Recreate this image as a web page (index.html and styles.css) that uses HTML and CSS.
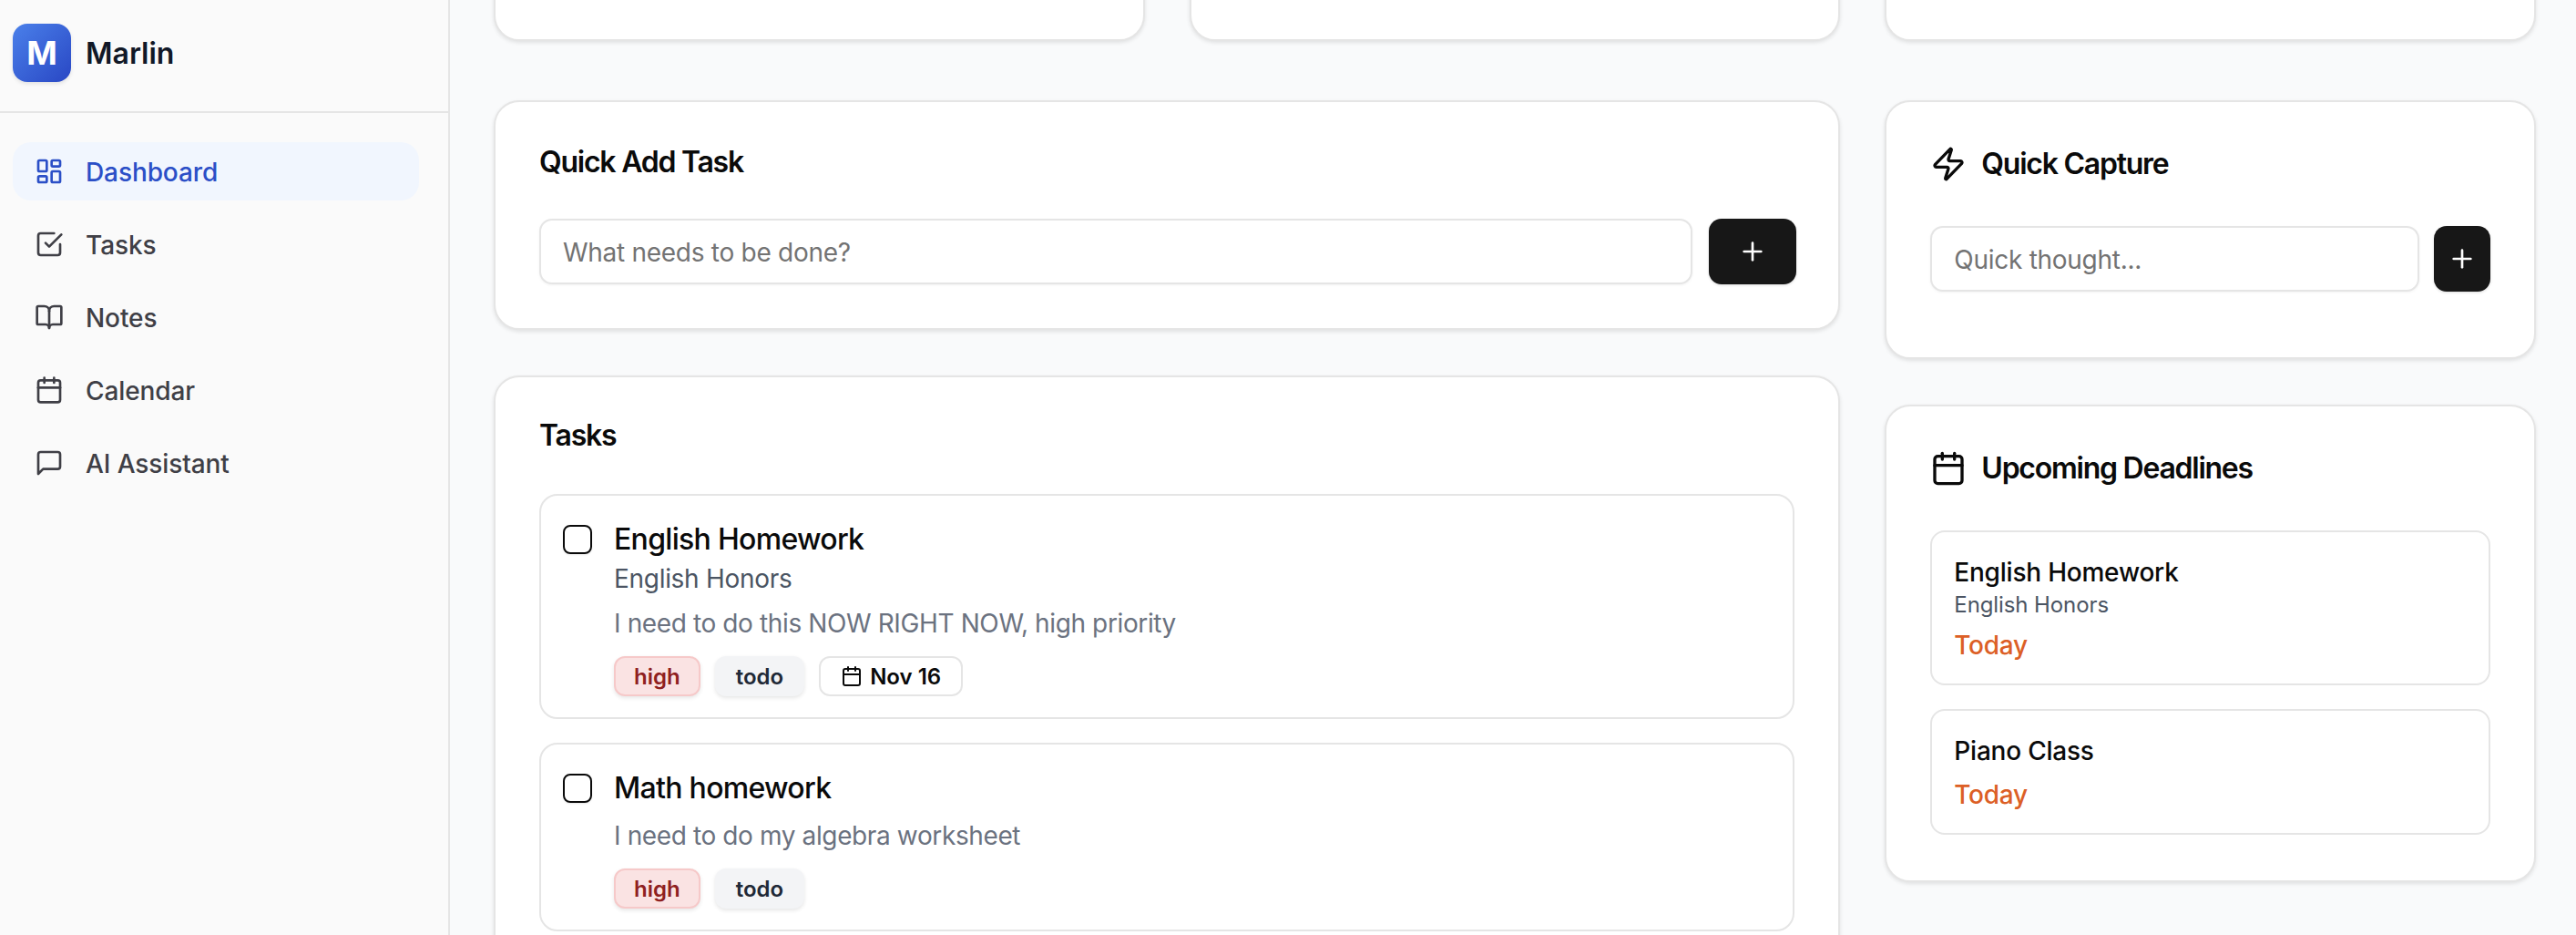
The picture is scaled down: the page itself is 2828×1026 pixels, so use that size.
FILE: index.html
```html
<!DOCTYPE html>
<html lang="en">
<head>
    <meta charset="UTF-8">
    <meta name="viewport" content="width=device-width, initial-scale=1.0">
    <title>Marlin</title>
    <link rel="stylesheet" href="styles.css">
</head>
<body>
    <aside class="sidebar">
        <div class="brand">
            <div class="brand-logo">M</div>
            <span class="brand-name">Marlin</span>
        </div>
        <nav class="nav">
            <a class="nav-item active" href="#">
                <svg class="icon" viewBox="0 0 24 24"><rect x="3" y="3" width="7" height="9" rx="1"/><rect x="14" y="3" width="7" height="5" rx="1"/><rect x="14" y="12" width="7" height="9" rx="1"/><rect x="3" y="16" width="7" height="5" rx="1"/></svg>
                Dashboard
            </a>
            <a class="nav-item" href="#">
                <svg class="icon" viewBox="0 0 24 24"><path d="m9 11 3 3L22 4"/><path d="M21 12v7a2 2 0 0 1-2 2H5a2 2 0 0 1-2-2V5a2 2 0 0 1 2-2h11"/></svg>
                Tasks
            </a>
            <a class="nav-item" href="#">
                <svg class="icon" viewBox="0 0 24 24"><path d="M12 7v14"/><path d="M3 18a1 1 0 0 1-1-1V4a1 1 0 0 1 1-1h5a4 4 0 0 1 4 4 4 4 0 0 1 4-4h5a1 1 0 0 1 1 1v13a1 1 0 0 1-1 1h-6a3 3 0 0 0-3 3 3 3 0 0 0-3-3z"/></svg>
                Notes
            </a>
            <a class="nav-item" href="#">
                <svg class="icon" viewBox="0 0 24 24"><path d="M8 2v4"/><path d="M16 2v4"/><rect x="3" y="4" width="18" height="18" rx="2"/><path d="M3 10h18"/></svg>
                Calendar
            </a>
            <a class="nav-item" href="#">
                <svg class="icon" viewBox="0 0 24 24"><path d="M21 15a2 2 0 0 1-2 2H7l-4 4V5a2 2 0 0 1 2-2h14a2 2 0 0 1 2 2z"/></svg>
                AI Assistant
            </a>
        </nav>
    </aside>

    <main class="content">
        <div class="stats">
            <div class="card stat-card"></div>
            <div class="card stat-card"></div>
            <div class="card stat-card"></div>
        </div>

        <div class="columns">
            <div class="column-wide">
                <section class="card">
                    <h3 class="card-title">Quick Add Task</h3>
                    <form class="add-form">
                        <input class="text-input" type="text" placeholder="What needs to be done?">
                        <button class="add-button add-button-wide" type="button">
                            <svg class="icon" viewBox="0 0 24 24"><path d="M5 12h14"/><path d="M12 5v14"/></svg>
                        </button>
                    </form>
                </section>

                <section class="card">
                    <h3 class="card-title tasks-title">Tasks</h3>
                    <div class="task-list">
                        <div class="task">
                            <span class="checkbox"></span>
                            <div class="task-body">
                                <div class="task-title">English Homework</div>
                                <div class="task-subject">English Honors</div>
                                <div class="task-desc">I need to do this NOW RIGHT NOW, high priority</div>
                                <div class="tags">
                                    <span class="tag tag-high">high</span>
                                    <span class="tag tag-status">todo</span>
                                    <span class="tag tag-date">
                                        <svg class="icon" viewBox="0 0 24 24"><path d="M8 2v4"/><path d="M16 2v4"/><rect x="3" y="4" width="18" height="18" rx="2"/><path d="M3 10h18"/></svg>
                                        Nov 16
                                    </span>
                                </div>
                            </div>
                        </div>
                        <div class="task">
                            <span class="checkbox"></span>
                            <div class="task-body">
                                <div class="task-title">Math homework</div>
                                <div class="task-desc">I need to do my algebra worksheet</div>
                                <div class="tags">
                                    <span class="tag tag-high">high</span>
                                    <span class="tag tag-status">todo</span>
                                </div>
                            </div>
                        </div>
                        <div class="task task-next"></div>
                    </div>
                </section>
            </div>

            <div class="column-side">
                <section class="card capture-card">
                    <h3 class="card-title side-title">
                        <svg class="icon" viewBox="0 0 24 24"><path d="M4 14a1 1 0 0 1-.78-1.63l9.9-10.2a.5.5 0 0 1 .86.46l-1.92 6.02A1 1 0 0 0 13 10h7a1 1 0 0 1 .78 1.63l-9.9 10.2a.5.5 0 0 1-.86-.46l1.92-6.02A1 1 0 0 0 11 14z"/></svg>
                        Quick Capture
                    </h3>
                    <form class="add-form">
                        <input class="text-input" type="text" placeholder="Quick thought...">
                        <button class="add-button" type="button">
                            <svg class="icon" viewBox="0 0 24 24"><path d="M5 12h14"/><path d="M12 5v14"/></svg>
                        </button>
                    </form>
                </section>

                <section class="card">
                    <h3 class="card-title side-title">
                        <svg class="icon" viewBox="0 0 24 24"><path d="M8 2v4"/><path d="M16 2v4"/><rect x="3" y="4" width="18" height="18" rx="2"/><path d="M3 10h18"/></svg>
                        Upcoming Deadlines
                    </h3>
                    <div class="deadline-list">
                        <div class="deadline">
                            <div class="deadline-title">English Homework</div>
                            <div class="deadline-subject">English Honors</div>
                            <div class="deadline-due">Today</div>
                        </div>
                        <div class="deadline">
                            <div class="deadline-title">Piano Class</div>
                            <div class="deadline-due">Today</div>
                        </div>
                    </div>
                </section>
            </div>
        </div>
    </main>
</body>
</html>
```

FILE: styles.css
```css
* {
    box-sizing: border-box;
}

html, body {
    height: 100%;
}

body {
    font-family: 'Inter', 'Liberation Sans', sans-serif;
    margin: 0;
    display: flex;
    overflow: hidden;
    background-color: #f9fafb;
    color: #0a0a0a;
}

.icon {
    fill: none;
    stroke: currentColor;
    stroke-width: 2;
    stroke-linecap: round;
    stroke-linejoin: round;
    flex-shrink: 0;
}

/* sidebar */

.sidebar {
    width: 494px;
    flex-shrink: 0;
    background-color: #fafafa;
    border-right: 2px solid #e5e5e5;
}

.brand {
    height: 124px;
    padding: 26px 14px 0;
    display: flex;
    align-items: flex-start;
    gap: 16px;
    border-bottom: 2px solid #e5e5e5;
}

.brand-logo {
    width: 64px;
    height: 64px;
    border-radius: 16px;
    background: linear-gradient(135deg, #4a80ea, #2947c4);
    box-shadow: 0 2px 4px rgba(0, 0, 0, 0.1);
    color: #fff;
    font-size: 36px;
    font-weight: 700;
    display: flex;
    align-items: center;
    justify-content: center;
}

.brand-name {
    font-size: 32px;
    line-height: 66px;
    font-weight: 600;
    color: #111827;
}

.nav {
    padding: 32px 32px 0 14px;
    display: flex;
    flex-direction: column;
    gap: 16px;
}

.nav-item {
    height: 64px;
    padding: 2px 24px 0;
    display: flex;
    align-items: center;
    gap: 24px;
    border-radius: 20px;
    font-size: 28px;
    font-weight: 500;
    letter-spacing: -0.1px;
    color: #3f3f46;
    text-decoration: none;
}

.nav-item .icon {
    width: 32px;
    height: 32px;
    margin-top: -2px;
}

.nav-item.active {
    background-color: #f1f6fe;
    color: #2b4fc7;
}

/* main area */

.content {
    flex: 1;
    min-width: 0;
    padding: 0 44px 0 48px;
}

.card {
    background-color: #fff;
    border: 2px solid #e5e5e5;
    border-radius: 28px;
    box-shadow: 0 2px 4px rgba(0, 0, 0, 0.1);
    padding: 48px;
}

.stats {
    display: grid;
    grid-template-columns: repeat(3, 1fr);
    column-gap: 49px;
    margin-top: -100px;
}

.stat-card {
    height: 145px;
}

.columns {
    display: grid;
    grid-template-columns: repeat(3, 1fr);
    column-gap: 49px;
    margin-top: 65px;
}

.column-wide {
    grid-column: span 2;
    display: flex;
    flex-direction: column;
    gap: 50px;
}

.column-side {
    display: flex;
    flex-direction: column;
    gap: 50px;
}

.card-title {
    margin: 0 0 44px;
    font-size: 32px;
    line-height: 36px;
    font-weight: 600;
    letter-spacing: -1.25px;
}

.tasks-title {
    margin-bottom: 48px;
    line-height: 32px;
}

.side-title {
    display: flex;
    align-items: center;
    gap: 16px;
    margin-bottom: 48px;
    line-height: 40px;
}

.side-title .icon {
    width: 40px;
    height: 40px;
}

/* forms */

.add-form {
    display: flex;
    gap: 16px;
}

.text-input {
    flex: 1;
    min-width: 0;
    height: 72px;
    padding: 2px 24px 0;
    border: 2px solid #e5e5e5;
    border-radius: 14px;
    box-shadow: 0 1px 3px rgba(0, 0, 0, 0.05);
    font-family: inherit;
    font-size: 28px;
    letter-spacing: -0.28px;
    background-color: #fff;
}

.text-input::placeholder {
    color: #737373;
}

.add-button {
    width: 62px;
    height: 72px;
    padding: 0;
    border: none;
    border-radius: 14px;
    background-color: #171717;
    box-shadow: 0 1px 3px rgba(0, 0, 0, 0.15);
    color: #fff;
    display: flex;
    align-items: center;
    justify-content: center;
}

.add-button-wide {
    width: 96px;
    margin-left: 2px;
    margin-right: -2px;
}

.add-button .icon {
    width: 32px;
    height: 32px;
}

.capture-card {
    padding-bottom: 72px;
}

/* tasks */

.task-list {
    display: flex;
    flex-direction: column;
    gap: 26px;
}

.task {
    display: flex;
    gap: 24px;
    padding: 28px 24px 23px;
    border: 2px solid #e5e5e5;
    border-radius: 20px;
}

.task-next {
    height: 200px;
}

.checkbox {
    width: 32px;
    height: 32px;
    margin-top: 4px;
    flex-shrink: 0;
    border: 2px solid #0a0a0a;
    border-radius: 8px;
    box-shadow: 0 1px 2px rgba(0, 0, 0, 0.1);
}

.task-title {
    font-size: 32px;
    line-height: 40px;
    font-weight: 500;
    letter-spacing: -0.7px;
}

.task-subject {
    margin-top: 6px;
    font-size: 28px;
    line-height: 34px;
    letter-spacing: -0.3px;
    color: #4b5563;
}

.task-desc {
    margin-top: 12px;
    font-size: 28px;
    line-height: 40px;
    letter-spacing: -0.38px;
    color: #6b7280;
}

.tags {
    display: flex;
    gap: 16px;
    margin-top: 16px;
}

.tag {
    height: 44px;
    padding: 0 20px;
    display: flex;
    align-items: center;
    gap: 8px;
    border: 2px solid transparent;
    border-radius: 12px;
    font-size: 24px;
    font-weight: 600;
    box-shadow: 0 2px 4px rgba(0, 0, 0, 0.1);
}

.tag .icon {
    width: 24px;
    height: 24px;
}

.tag-high {
    background-color: #fae3e3;
    border-color: #f6c9c9;
    color: #8f2020;
}

.tag-status {
    padding: 0 21px;
    background-color: #f3f4f6;
    color: #1f2937;
}

.tag-date {
    padding: 0 22px;
    background-color: #fff;
    border-color: #e5e5e5;
    box-shadow: none;
}

/* deadlines */

.deadline-list {
    display: flex;
    flex-direction: column;
    gap: 26px;
    margin-bottom: 2px;
}

.deadline {
    padding: 24px 24px 22px;
    border: 2px solid #e5e5e5;
    border-radius: 16px;
}

.deadline-title {
    font-size: 28px;
    line-height: 40px;
    font-weight: 500;
    letter-spacing: -0.22px;
}

.deadline-subject {
    font-size: 24px;
    line-height: 32px;
    letter-spacing: -0.1px;
    color: #4b5563;
}

.deadline-due {
    margin-top: 8px;
    font-size: 28px;
    line-height: 40px;
    font-weight: 500;
    letter-spacing: -0.3px;
    color: #dc5f26;
}
```
